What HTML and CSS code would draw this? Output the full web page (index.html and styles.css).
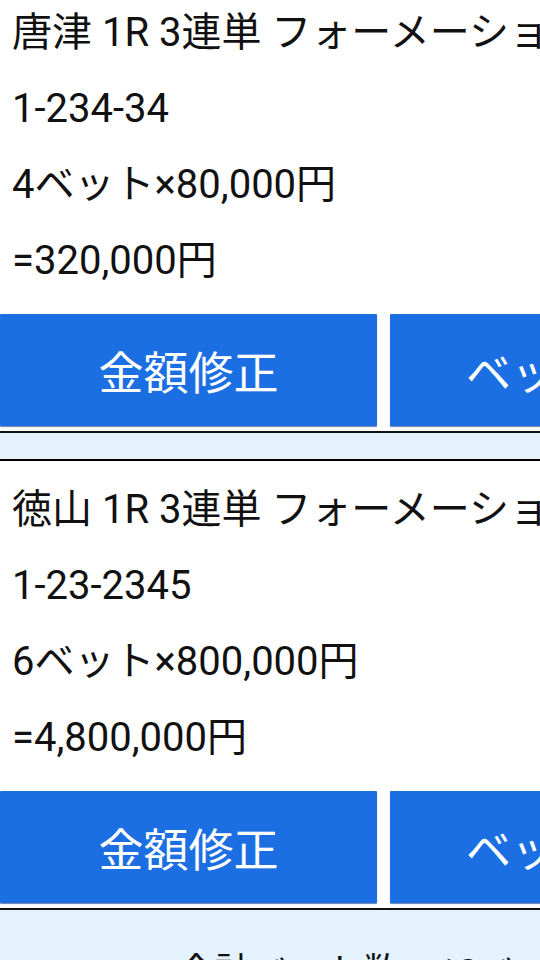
FILE: index.html
```html
<!DOCTYPE html>
<html lang="ja">
<head>
<meta charset="utf-8">
<title>ベット一覧</title>
<link rel="stylesheet" href="styles.css">
</head>
<body>
<div class="screen">
  <div class="list">
    <section class="card">
      <p class="row">唐津 1R 3連単 フォーメーション</p>
      <p class="row">1-234-34</p>
      <p class="row">4ベット×80,000円</p>
      <p class="row">=320,000円</p>
      <div class="actions">
        <button class="btn">金額修正</button>
        <button class="btn">ベット削除</button>
      </div>
    </section>
    <section class="card">
      <p class="row">徳山 1R 3連単 フォーメーション</p>
      <p class="row">1-23-2345</p>
      <p class="row">6ベット×800,000円</p>
      <p class="row">=4,800,000円</p>
      <div class="actions">
        <button class="btn">金額修正</button>
        <button class="btn">ベット削除</button>
      </div>
    </section>
    <div class="summary">
      <p class="summary-line">合計ベット数　10ベット</p>
      <p class="summary-line">合計金額　5,120,000円</p>
    </div>
  </div>
</div>
</body>
</html>
```

FILE: styles.css
```css
html, body {
  margin: 0;
  padding: 0;
  overflow: hidden;
  background: #ffffff;
}

.screen {
  width: 540px;
  height: 960px;
  overflow: hidden;
  font-family: Roboto, "Noto Sans CJK JP", sans-serif;
  color: #111111;
}

.list {
  width: 767px;
  margin-top: -18px;
  background: #e3f2fd;
  display: flex;
  flex-direction: column;
}

.card {
  background: #ffffff;
  border-top: 2px solid #000000;
  border-bottom: 2px solid #111111;
  padding: 11px 0 5px;
  margin-bottom: 26px;
}

.card:last-of-type {
  margin-bottom: 0;
}

.row {
  margin: 0;
  padding-left: 12px;
  font-size: 40px;
  line-height: 76px;
  height: 76px;
  white-space: nowrap;
}

.actions {
  margin-top: 15px;
  display: grid;
  grid-template-columns: 1fr 1fr;
  gap: 13px;
}

.btn {
  height: 112px;
  border: none;
  border-radius: 1px;
  background: #1b6fe3;
  color: #ffffff;
  font-family: Roboto, "Noto Sans CJK JP", sans-serif;
  font-size: 45px;
  padding: 0;
  box-shadow: 0 1px 1px rgba(10, 40, 120, 0.6);
  white-space: nowrap;
}

.summary {
  padding-top: 41px;
  text-align: center;
}

.summary-line {
  margin: 0 0 20px;
  font-size: 37px;
  line-height: 44px;
  white-space: nowrap;
}
```
